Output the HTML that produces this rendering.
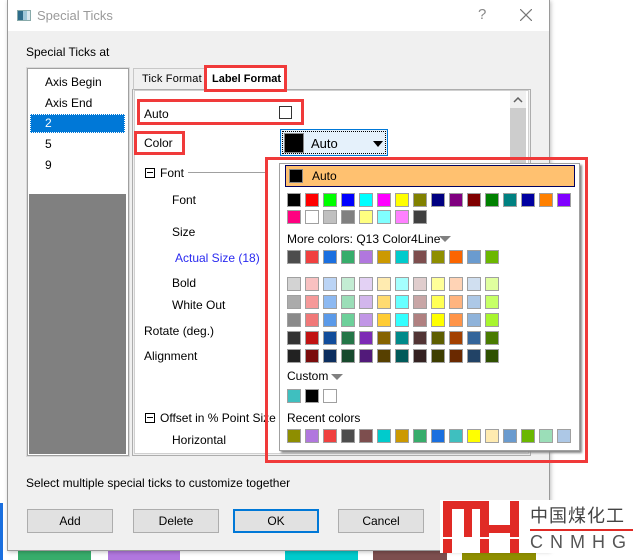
<!DOCTYPE html>
<html><head><meta charset="utf-8"><style>
*{margin:0;padding:0;box-sizing:border-box}
body{width:633px;height:560px;position:relative;overflow:hidden;background:#fff;font-family:"Liberation Sans",sans-serif;font-size:12px;color:#000}
.a{position:absolute;white-space:nowrap}
.rb{position:absolute;border:3px solid #f03a3a}
.sw{position:absolute;width:14px;height:14px;border:1px solid #a0a0a0}
.btn{position:absolute;top:509px;height:24px;width:86px;background:#e1e1e1;border:1px solid #adadad;text-align:center;line-height:22px}
</style></head><body>
<!-- bottom colored bars -->
<div class="a" style="left:0;top:503px;width:3px;height:57px;background:#1a6fdf"></div>
<div class="a" style="left:18px;top:549px;width:73px;height:11px;background:#37ad6b"></div>
<div class="a" style="left:108px;top:549px;width:72px;height:11px;background:#b177de"></div>
<div class="a" style="left:285px;top:549px;width:73px;height:11px;background:#00cbcc"></div>
<div class="a" style="left:373px;top:549px;width:74px;height:11px;background:#7d4e4e"></div>
<div class="a" style="left:462px;top:549px;width:74px;height:11px;background:#8e8e00"></div>
<!-- dialog -->
<div class="a" style="left:7px;top:0;width:543px;height:551px;background:#f0f0f0;border:1px solid #9a9a9a;box-shadow:1px 1px 4px rgba(0,0,0,.25)"></div>
<div class="a" style="left:8px;top:0;width:541px;height:31px;background:#fff"></div>
<div class="a" style="left:17px;top:10px;width:14px;height:11px;background:linear-gradient(90deg,#2d6c8a 0 5px,#9ec7d8 5px 9px,#d9e8ee 9px);border:1px solid #8aa"></div>
<div class="a" style="left:37px;top:8px;font-size:13px;color:#9a9a9a">Special Ticks</div>
<div class="a" style="left:478px;top:6px;font-size:15px;color:#888">?</div>
<svg class="a" style="left:520px;top:9px" width="12" height="12"><path d="M0 0L12 12M12 0L0 12" stroke="#777" stroke-width="1.2"/></svg>
<div class="a" style="left:26px;top:45px">Special Ticks at</div>
<!-- list -->
<div class="a" style="left:27px;top:68px;width:102px;height:388px;border:1px solid #a0a0a0;background:#fff;outline:1px solid #dadada"></div>
<div class="a" style="left:29px;top:194px;width:97px;height:260px;background:#808080"></div>
<div class="a" style="left:30px;top:114px;width:95px;height:19px;background:#0078d7;border:1px dotted #fff"></div>
<div class="a" style="left:45px;top:75px">Axis Begin</div>
<div class="a" style="left:45px;top:96px">Axis End</div>
<div class="a" style="left:45px;top:116px;color:#fff">2</div>
<div class="a" style="left:45px;top:137px">5</div>
<div class="a" style="left:45px;top:158px">9</div>
<!-- tab panel -->
<div class="a" style="left:132px;top:89px;width:399px;height:367px;border:1px solid #adadad"></div>
<div class="a" style="left:134px;top:90px;width:395px;height:364px;border:1px solid #d0d0d0;background:#fff"></div>
<div class="a" style="left:133px;top:68px;width:72px;height:22px;border:1px solid #c8c8c8;border-bottom:none"></div>
<div class="a" style="left:142px;top:73px;font-size:11px;letter-spacing:.2px">Tick Format</div>
<div class="a" style="left:204px;top:66px;width:83px;height:25px;background:#fff;border:1px solid #c8c8c8;border-bottom:none"></div>
<div class="a" style="left:212px;top:73px;font-weight:bold;font-size:11px">Label Format</div>
<div class="rb" style="left:204px;top:65px;width:83px;height:27px"></div>
<!-- scrollbar -->
<div class="a" style="left:510px;top:91px;width:16px;height:362px;background:#f0f0f0"></div>
<div class="a" style="left:510px;top:108px;width:16px;height:60px;background:#cdcdcd"></div>
<svg class="a" style="left:513px;top:97px" width="10" height="6"><path d="M1 5L5 1L9 5" stroke="#606060" stroke-width="1.5" fill="none"/></svg>
<!-- rows -->
<div class="a" style="left:144px;top:107px">Auto</div>
<div class="a" style="left:279px;top:106px;width:13px;height:13px;border:1px solid #333;background:#fff"></div>
<div class="rb" style="left:137px;top:99px;width:167px;height:26px"></div>
<div class="a" style="left:144px;top:136px">Color</div>
<div class="rb" style="left:134px;top:131px;width:51px;height:24px"></div>
<div class="a" style="left:280px;top:129px;width:108px;height:27px;background:#e5f1fb;border:1px solid #0078d7"></div>
<div class="a" style="left:282px;top:131px;width:104px;height:23px;border:1px dotted #000"></div>
<div class="a" style="left:284px;top:133px;width:20px;height:20px;background:#000;border:1px solid #888"></div>
<div class="a" style="left:311px;top:136px;font-size:13px">Auto</div>
<svg class="a" style="left:373px;top:141px" width="10" height="6"><path d="M0 0H10L5 6Z" fill="#000"/></svg>

<div class="a" style="left:145px;top:168px;width:10px;height:10px;border:1px solid #000"></div>
<div class="a" style="left:147px;top:172px;width:6px;height:1px;background:#000"></div>
<div class="a" style="left:160px;top:166px">Font</div>
<div class="a" style="left:188px;top:172px;width:80px;height:1px;background:#a0a0a0"></div>
<div class="a" style="left:172px;top:193px">Font</div>
<div class="a" style="left:172px;top:225px">Size</div>
<div class="a" style="left:175px;top:251px;color:#2a2af0">Actual Size (18)</div>
<div class="a" style="left:172px;top:276px">Bold</div>
<div class="a" style="left:172px;top:298px">White Out</div>
<div class="a" style="left:144px;top:324px">Rotate (deg.)</div>
<div class="a" style="left:144px;top:349px">Alignment</div>
<div class="a" style="left:145px;top:413px;width:10px;height:10px;border:1px solid #000"></div>
<div class="a" style="left:147px;top:417px;width:6px;height:1px;background:#000"></div>
<div class="a" style="left:160px;top:411px">Offset in % Point Size</div>
<div class="a" style="left:172px;top:433px">Horizontal</div>
<!-- popup -->
<div class="a" style="left:279px;top:163px;width:301px;height:288px;background:#fff;border:1px solid #a0a0a0;box-shadow:2px 2px 2px #888"></div>
<div class="a" style="left:285px;top:165px;width:290px;height:22px;background:#ffc170;border:1px solid #000060"></div>
<div class="a" style="left:289px;top:169px;width:14px;height:14px;background:#000;border:1px solid #888"></div>
<div class="a" style="left:312px;top:169px">Auto</div>
<div class="a" style="left:287px;top:232px">More colors: Q13 Color4Line</div>
<svg class="a" style="left:439px;top:236px" width="12" height="6"><path d="M0 0H12L6 6Z" fill="#808080"/></svg>
<div class="a" style="left:287px;top:369px">Custom</div>
<svg class="a" style="left:331px;top:374px" width="12" height="6"><path d="M0 0H12L6 6Z" fill="#808080"/></svg>
<div class="a" style="left:287px;top:411px">Recent colors</div>
<div id="sw"></div>
<div class="rb" style="left:265px;top:157px;width:323px;height:306px"></div>
<!-- bottom -->
<div class="a" style="left:26px;top:476px">Select multiple special ticks to customize together</div>
<div class="btn" style="left:27px">Add</div>
<div class="btn" style="left:133px">Delete</div>
<div class="btn" style="left:233px;border:2px solid #0078d7;line-height:20px">OK</div>
<div class="btn" style="left:338px">Cancel</div>
<!-- logo -->
<div class="a" style="left:440px;top:500px;width:193px;height:53px;background:#fff"></div>
<svg class="a" style="left:440px;top:501px" width="90" height="52"><g fill="#e02a25"><rect x="3" y="0" width="9" height="52"/><rect x="3" y="0" width="45" height="8"/><rect x="24" y="0" width="8" height="38"/><rect x="40" y="0" width="9" height="52"/><rect x="70" y="0" width="9" height="52"/><rect x="49" y="24" width="21" height="8"/></g><rect x="0" y="36" width="90" height="2" fill="#fff"/></svg>
<div class="a" style="left:530px;top:503px;font-family:'Noto Sans CJK SC',sans-serif;font-size:18px;color:#444;letter-spacing:1px;line-height:24px">中国煤化工</div>
<div class="a" style="left:530px;top:529px;width:103px;height:2px;background:#e02a25"></div>
<div class="a" style="left:530px;top:532px;font-size:18px;color:#555;letter-spacing:7px">CNMHG</div>
<script>
var rows=[
[193,287,"000000 ff0000 00ff00 0000ff 00ffff ff00ff ffff00 808000 000080 800080 800000 008000 008080 0000a0 ff8000 8000ff"],
[210,287,"ff0080 ffffff c0c0c0 808080 ffff80 80ffff ff80ff 404040"],
[250,287,"4d4d4d f0403f 1a6fdf 37ad6b b177de cc9900 00cbcc 7d4e4e 8e8e00 fb6500 6a9bcf 6bb700"],
[277,287,"d3d3d3 f8c1c1 bbd4f5 c3ecd3 e3d1f4 ffebb0 a5fffe e0cdcd ffff99 ffd3b5 d0dff0 e0ff9f"],
[295,287,"ababab f59999 8db9f1 9bdeb8 d2b6ec ffdb70 66ffff c8a6a6 ffff55 ffb47f adc8e6 c6ff66"],
[313,287,"8a8a8a f07878 5b9ae9 6dd09a c196e6 ffcc33 33ffff b08080 ffff00 ff9448 8fb3da a8f52e"],
[331,287,"333333 c11313 124d9b 247547 7d2bb5 866300 008a8a 523535 5e5e00 a34000 34659a 497a00"],
[349,287,"222222 7b0c0c 0c2e5f 174a2d 521a7a 574000 005a5a 352222 3d3d00 6a2900 224366 2f5000"],
[389,287,"3fbfbf 000000 ffffff"],
[429,287,"8e8e00 b177de f0403f 4d4d4d 7d4e4e 00cbcc cc9900 37ad6b 1a6fdf 3fbfbf ffff00 ffebb0 6a9bcf 6bb700 9bdeb8 adc8e6"]];
var h="";rows.forEach(function(r){r[2].split(" ").forEach(function(c,i){h+='<div class="sw" style="left:'+(r[1]+i*18)+'px;top:'+r[0]+'px;background:#'+c+'"></div>';});});
document.getElementById("sw").innerHTML=h;
</script>
</body></html>
